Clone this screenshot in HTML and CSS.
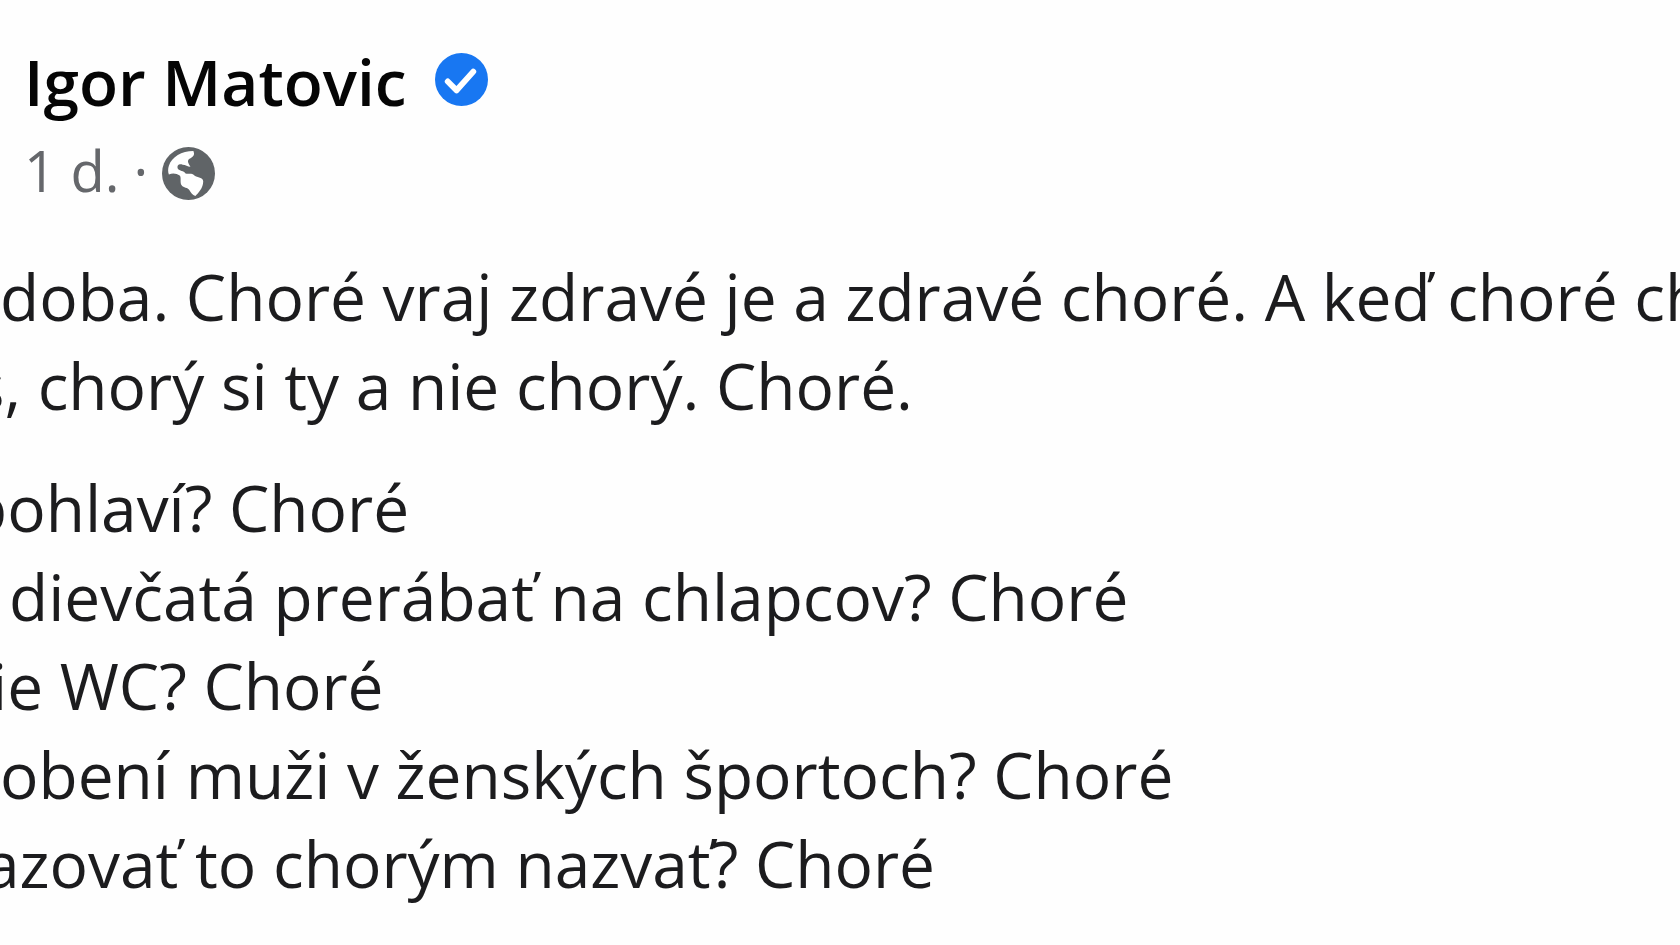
FILE: index.html
```
<!DOCTYPE html>
<html lang="sk">
<head>
  <meta charset="UTF-8">
  <meta name="viewport" content="width=device-width, initial-scale=1.0">
  <title>Igor Matovic</title>
  <link rel="stylesheet" href="styles.css">
</head>
<body>
  <article class="post">
    <header class="post-header">
      <h1 class="author">
        <a href="#">Igor Matovic</a>
        <svg class="icon" viewBox="0 0 54 54" role="img" aria-label="Overený účet">
          <circle cx="27" cy="27" r="27" fill="#1877f2"/>
          <path d="M13 29l9 9 17-19" fill="none" stroke="#fff" stroke-width="6" stroke-linecap="round" stroke-linejoin="round"/>
        </svg>
      </h1>
      <div class="meta">
        <a href="#">1 d.</a>
        <span>·</span>
        <svg class="icon" viewBox="0 0 54 54" role="img" aria-label="Verejné">
          <circle cx="27" cy="27" r="27" fill="#606467"/>
          <path d="M32 4C20 4 10 10 7 19C6 22 6 25 7 28C11 26 15 27 18 29C20 31 18 36 20 39C22 42 26 41 28 44C29 46 31 49 34 50C37 47 42 42 42 35C42 31 36 31 33 29C30 26 27 28 24 27C22 24 18 25 16 22C15 18 18 17 21 18C24 18 26 20 29 20C27 17 25 14 28 12C31 10 34 9 32 4Z" fill="#fff"/>
        </svg>
      </div>
    </header>

    <div class="text">
      <p>
        <span class="line">doba. Choré vraj zdravé je a zdravé choré. A keď choré ch</span>
        <span class="line cut-letter">š, chorý si ty a nie chorý. Choré.</span>
      </p>
      <p>
        <span class="line cut-wide">pohlaví? Choré</span>
        <span class="line spaced">dievčatá prerábať na chlapcov? Choré</span>
        <span class="line cut-narrow">ie WC? Choré</span>
        <span class="line">obení muži v ženských športoch? Choré</span>
        <span class="line cut-half">azovať to chorým nazvať? Choré</span>
      </p>
    </div>
  </article>
</body>
</html>
```
FILE: styles.css
```
* {
  box-sizing: border-box;
}
body {
  margin: 0;
  background-color: #fefefe;
  color: #1c1c1e;
  font-family: "Open Sans", "Noto Sans", sans-serif;
  font-size: 64px;
  line-height: 89px;
  overflow: hidden;
}
a {
  color: inherit;
  text-decoration: none;
}
.post {
  padding-top: 37px;
}
.post-header {
  padding-left: 24px;
}
.author {
  display: flex;
  align-items: flex-start;
  gap: 28px;
  margin: 0;
  color: #050505;
  font-size: 64px;
  font-weight: 600;
}
.meta {
  display: flex;
  align-items: center;
  gap: 14px;
  color: #65676b;
  font-size: 56px;
}
.icon {
  width: 53px;
  height: 53px;
}
.author .icon {
  margin-top: 16px;
}
.meta .icon {
  margin-top: 6px;
}
.text {
  padding-top: 37px;
}
.text p {
  margin: 0 0 33px;
}
.line {
  display: block;
  white-space: nowrap;
}
/* Riadky začínajú za ľavým okrajom stránky */
.cut-wide {
  text-indent: -32px;
}
.cut-letter {
  text-indent: -26px;
}
.cut-half {
  text-indent: -16px;
}
.cut-narrow {
  text-indent: -9px;
}
.spaced {
  text-indent: 9px;
}
```
